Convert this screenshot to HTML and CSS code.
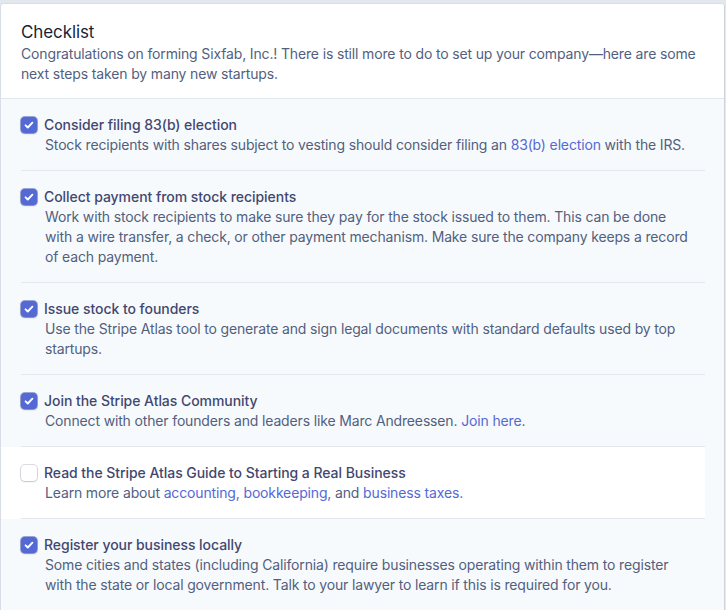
FILE: index.html
```html
<!DOCTYPE html>
<html>
<head>
<meta charset="utf-8">
<link rel="stylesheet" href="styles.css">
</head>
<body>
<div class="card">
  <div class="header">
    <h1 class="title">Checklist</h1>
    <p class="subtitle">Congratulations on forming Sixfab, Inc.! There is still more to do to set up your company—here are some next steps taken by many new startups.</p>
  </div>
  <ul class="list">
    <li class="item">
      <div class="inner">
        <div class="head"><span class="box checked"><svg viewBox="0 0 16 16" width="16" height="16"><path d="M4.6 8.3l2.2 2.2 4.6-4.8" fill="none" stroke="#fff" stroke-width="1.9" stroke-linecap="round" stroke-linejoin="round"/></svg></span><span class="name">Consider filing 83(b) election</span></div>
        <p class="desc">Stock recipients with shares subject to vesting should consider filing an <a class="link">83(b) election</a> with the IRS.</p>
      </div>
    </li>
    <li class="item">
      <div class="inner">
        <div class="head"><span class="box checked"><svg viewBox="0 0 16 16" width="16" height="16"><path d="M4.6 8.3l2.2 2.2 4.6-4.8" fill="none" stroke="#fff" stroke-width="1.9" stroke-linecap="round" stroke-linejoin="round"/></svg></span><span class="name">Collect payment from stock recipients</span></div>
        <p class="desc">Work with stock recipients to make sure they pay for the stock issued to them. This can be done with a wire transfer, a check, or other payment mechanism. Make sure the company keeps a record of each payment.</p>
      </div>
    </li>
    <li class="item">
      <div class="inner">
        <div class="head"><span class="box checked"><svg viewBox="0 0 16 16" width="16" height="16"><path d="M4.6 8.3l2.2 2.2 4.6-4.8" fill="none" stroke="#fff" stroke-width="1.9" stroke-linecap="round" stroke-linejoin="round"/></svg></span><span class="name">Issue stock to founders</span></div>
        <p class="desc">Use the Stripe Atlas tool to generate and sign legal documents with standard defaults used by top startups.</p>
      </div>
    </li>
    <li class="item">
      <div class="inner">
        <div class="head"><span class="box checked"><svg viewBox="0 0 16 16" width="16" height="16"><path d="M4.6 8.3l2.2 2.2 4.6-4.8" fill="none" stroke="#fff" stroke-width="1.9" stroke-linecap="round" stroke-linejoin="round"/></svg></span><span class="name">Join the Stripe Atlas Community</span></div>
        <p class="desc">Connect with other founders and leaders like Marc Andreessen. <a class="link">Join here</a>.</p>
      </div>
    </li>
    <li class="item open">
      <div class="inner">
        <div class="head"><span class="box"></span><span class="name">Read the Stripe Atlas Guide to Starting a Real Business</span></div>
        <p class="desc">Learn more about <a class="link">accounting, bookkeeping,</a> and <a class="link">business taxes.</a></p>
      </div>
    </li>
    <li class="item">
      <div class="inner last">
        <div class="head"><span class="box checked"><svg viewBox="0 0 16 16" width="16" height="16"><path d="M4.6 8.3l2.2 2.2 4.6-4.8" fill="none" stroke="#fff" stroke-width="1.9" stroke-linecap="round" stroke-linejoin="round"/></svg></span><span class="name">Register your business locally</span></div>
        <p class="desc">Some cities and states (including California) require businesses operating within them to register with the state or local government. Talk to your lawyer to learn if this is required for you.</p>
      </div>
    </li>
  </ul>
</div>
</body>
</html>
```
FILE: styles.css
```css
html, body {
  margin: 0;
  padding: 0;
  background: #e3e8ee;
  font-family: Inter, "Noto Sans", sans-serif;
  font-size: 14px;
  line-height: 20px;
  -webkit-font-smoothing: antialiased;
}
.card {
  margin: 3px 0 0 0;
  width: 723px;
  height: 620px;
  background: #f7fafc;
  border: 1px solid #d9dee6;
  border-right-color: #cfd4dc;
  border-radius: 4px;
  overflow: hidden;
}
.header {
  background: #fff;
  padding: 16px 20px 14px 20px;
  border-bottom: 1px solid #e3e8ee;
}
.title {
  margin: 0;
  font-size: 17px;
  line-height: 24px;
  font-weight: 400;
  color: #1a1f36;
  letter-spacing: -0.1px;
}
.subtitle {
  margin: 0;
  color: #525f7f;
  letter-spacing: -0.15px;
}
.list {
  list-style: none;
  margin: 0;
  padding: 0 19px 0 0;
}
.item {
  padding-left: 20px;
  background: #f7fafc;
}
.item.open {
  background: #fff;
}
.inner {
  padding: 16px 0 15px 0;
  border-bottom: 1px solid #e3e8ee;
}
.inner.last {
  border-bottom: none;
}
.head {
  display: flex;
  align-items: center;
  height: 20px;
}
.box {
  width: 16px;
  height: 16px;
  border-radius: 4px;
  margin-right: 7px;
  flex: none;
  background: #fff;
  box-shadow: 0 0 0 1px rgba(60, 66, 87, 0.18), 0 1px 2px rgba(0, 0, 0, 0.12);
  display: flex;
}
.box.checked {
  background: #5469d4;
  box-shadow: 0 0 0 1px rgba(64, 80, 180, 0.5), 0 1px 2px rgba(0, 0, 0, 0.2);
}
.name {
  color: #424770;
  font-weight: 500;
  letter-spacing: -0.05px;
}
.desc {
  margin: 0;
  padding: 0 14px 0 24px;
  color: #525f7f;
  letter-spacing: -0.15px;
}
.link {
  color: #5469d4;
  text-decoration: none;
}
```
